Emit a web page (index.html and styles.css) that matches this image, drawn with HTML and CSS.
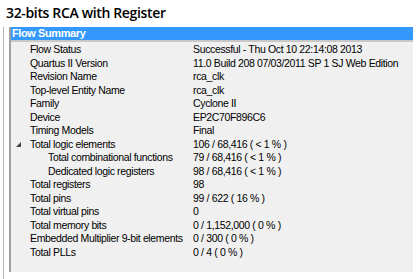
FILE: index.html
```html
<!DOCTYPE html>
<html lang="en">
<head>
  <meta charset="UTF-8">
  <title>Flow Summary</title>
  <link rel="stylesheet" href="styles.css">
</head>
<body>
  <h1 class="title">32-bits RCA with Register</h1>
  <div class="frame">
    <div class="panel">
      <div class="panel-header">Flow Summary</div>
      <div class="summary">
        <div class="row"><span class="label">Flow Status</span><span class="value">Successful - Thu Oct 10 22:14:08 2013</span></div>
        <div class="row"><span class="label">Quartus II Version</span><span class="value">11.0 Build 208 07/03/2011 SP 1 SJ Web Edition</span></div>
        <div class="row"><span class="label">Revision Name</span><span class="value">rca_clk</span></div>
        <div class="row"><span class="label">Top-level Entity Name</span><span class="value">rca_clk</span></div>
        <div class="row"><span class="label">Family</span><span class="value">Cyclone II</span></div>
        <div class="row"><span class="label">Device</span><span class="value">EP2C70F896C6</span></div>
        <div class="row"><span class="label">Timing Models</span><span class="value">Final</span></div>
        <div class="row"><span class="label"><span class="toggle"></span>Total logic elements</span><span class="value">106 / 68,416 ( &lt; 1 % )</span></div>
        <div class="row"><span class="label child">Total combinational functions</span><span class="value">79 / 68,416 ( &lt; 1 % )</span></div>
        <div class="row"><span class="label child">Dedicated logic registers</span><span class="value">98 / 68,416 ( &lt; 1 % )</span></div>
        <div class="row"><span class="label">Total registers</span><span class="value">98</span></div>
        <div class="row"><span class="label">Total pins</span><span class="value">99 / 622 ( 16 % )</span></div>
        <div class="row"><span class="label">Total virtual pins</span><span class="value">0</span></div>
        <div class="row"><span class="label">Total memory bits</span><span class="value">0 / 1,152,000 ( 0 % )</span></div>
        <div class="row"><span class="label">Embedded Multiplier 9-bit elements</span><span class="value">0 / 300 ( 0 % )</span></div>
        <div class="row"><span class="label">Total PLLs</span><span class="value">0 / 4 ( 0 % )</span></div>
      </div>
    </div>
  </div>
</body>
</html>
```

FILE: styles.css
```css
body {
  margin: 0;
  background-color: #ffffff;
  font-family: "Liberation Sans", Arial, sans-serif;
  color: #000;
}

.title {
  margin: 0;
  padding: 4px 0 0 6px;
  height: 23px;
  font-family: "Open Sans", sans-serif;
  font-size: 14px;
  font-weight: 600;
  line-height: 18px;
  letter-spacing: -0.35px;
}

.frame {
  margin-left: 3px;
  border-left: 1px solid #b4b4b4;
  padding-left: 5px;
  height: 252px;
}

.panel {
  width: 402px;
  height: 245px;
  border-left: 2px solid #a0a0a0;
  background-color: #f0f0f0;
}

.panel-header {
  height: 13px;
  padding-left: 1px;
  background-color: #3399ff;
  color: #fff;
  font-size: 11px;
  font-weight: bold;
  line-height: 13px;
  letter-spacing: -0.4px;
  border-bottom: 2px solid #c8c8c8;
}

.summary {
  padding-top: 1px;
  font-size: 10.5px;
  letter-spacing: -0.35px;
}

.row {
  display: flex;
  height: 13.5px;
  line-height: 13.5px;
  white-space: nowrap;
}

.label {
  position: relative;
  width: 163px;
  padding-left: 19px;
}

.label.child {
  width: 145px;
  padding-left: 37px;
}

.toggle {
  position: absolute;
  left: 5px;
  top: 4px;
  width: 0;
  height: 0;
  border-left: 5px solid transparent;
  border-bottom: 5px solid #444;
}
```
